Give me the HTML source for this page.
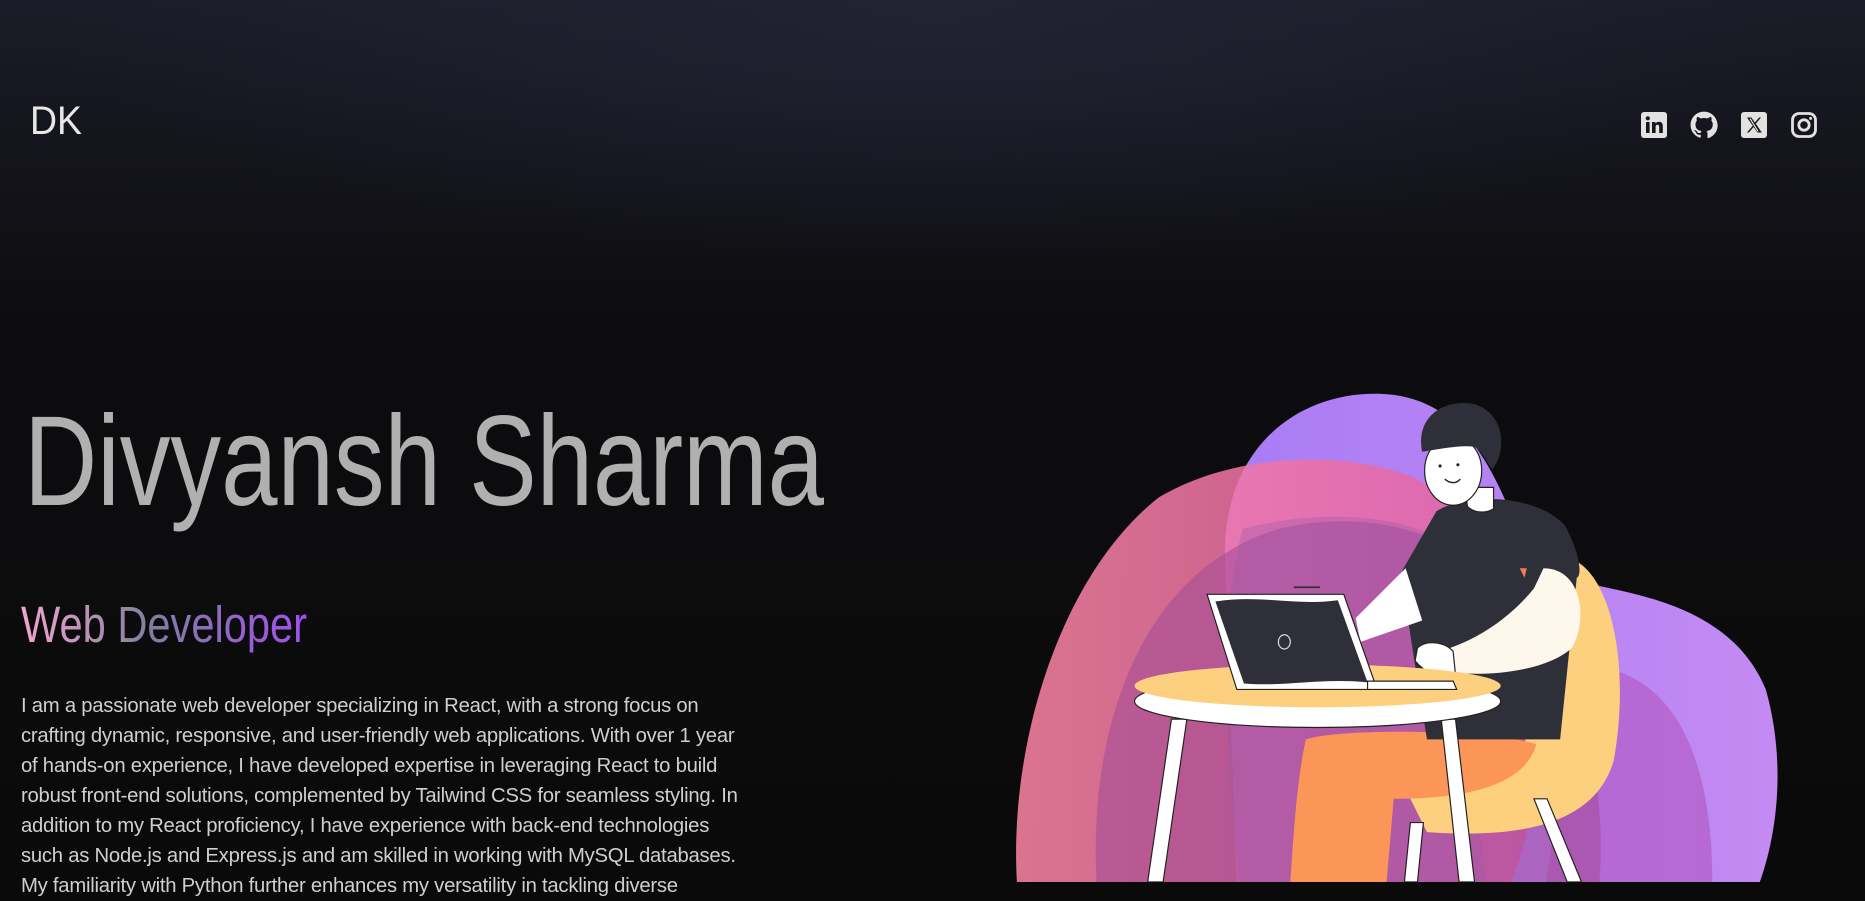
<!DOCTYPE html>
<html style="background:#0a0a0a"><head><meta charset="utf-8"><style>
html,body{margin:0;padding:0}
body{width:1865px;height:882px;overflow:hidden;position:relative;font-family:"Liberation Sans",sans-serif;
background:radial-gradient(ellipse 900px 260px at 50% 0%, #222234 0%, rgba(34,34,52,0) 100%),linear-gradient(to bottom,#1c1c28 0%,#15151d 130px,#0d0d10 320px,#0a0a0a 100%);}
.abs{position:absolute}
#para{left:21px;top:691px;font-size:20.3px;line-height:30px;color:#cfcfcf;white-space:nowrap;letter-spacing:-0.25px}
</style></head><body>

<svg class="abs" style="left:0;top:0" width="1865" height="882">
<defs>
<linearGradient id="wd" x1="0" x2="1" y1="0" y2="0">
<stop offset="0" stop-color="#f3a6cf"/><stop offset="0.45" stop-color="#7f7f9c"/><stop offset="1" stop-color="#a24ff0"/>
</linearGradient>
</defs>
<text x="30" y="134" font-family="Liberation Sans" font-size="40" fill="#e8e8e8" textLength="52" lengthAdjust="spacingAndGlyphs">DK</text>
<text x="24" y="505" font-family="Liberation Sans" font-size="128" fill="#b0b0b0" textLength="800" lengthAdjust="spacingAndGlyphs">Divyansh Sharma</text>
<text x="21" y="642" font-family="Liberation Sans" font-size="51" fill="url(#wd)" textLength="286" lengthAdjust="spacingAndGlyphs">Web Developer</text>
</svg>

<div id="para" class="abs">I am a passionate web developer specializing in React, with a strong focus on<br>crafting dynamic, responsive, and user-friendly web applications. With over 1 year<br>of hands-on experience, I have developed expertise in leveraging React to build<br>robust front-end solutions, complemented by Tailwind CSS for seamless styling. In<br>addition to my React proficiency, I have experience with back-end technologies<br>such as Node.js and Express.js and am skilled in working with MySQL databases.<br>My familiarity with Python further enhances my versatility in tackling diverse</div>

<svg class="abs" style="left:1641px;top:112px" width="26" height="26" viewBox="0 0 26 26">
<rect x="0" y="0" width="26" height="26" rx="3" fill="#e2e2e2"/>
<rect x="5" y="10" width="3.6" height="11" fill="#15151d"/><circle cx="6.8" cy="6.3" r="2.1" fill="#15151d"/>
<path d="M11 10h3.4v1.6c.6-1 1.8-1.9 3.6-1.9 3 0 3.8 2 3.8 4.6V21h-3.6v-5.8c0-1.3-.3-2.4-1.7-2.4s-1.9 1-1.9 2.4V21H11z" fill="#15151d"/>
</svg>
<svg class="abs" style="left:1690px;top:111px" width="28" height="28" viewBox="0 0 24 24">
<path fill="#e2e2e2" d="M12 .5C5.6.5.5 5.6.5 12c0 5.1 3.3 9.4 7.900 10.9.6.1.8-.2.8-.6v-2c-3.2.7-3.900-1.5-3.900-1.5-.5-1.3-1.3-1.7-1.3-1.7-1-.7.1-.7.1-.7 1.2.1 1.800 1.200 1.800 1.200 1 1.800 2.800 1.300 3.400 1 .1-.8.4-1.300.7-1.500-2.600-.3-5.300-1.300-5.300-5.700 0-1.300.5-2.300 1.200-3.100-.1-.3-.5-1.500.1-3.100 0 0 1-.3 3.200 1.200a11 11 0 0 1 5.800 0c2.200-1.500 3.200-1.200 3.200-1.200.6 1.600.2 2.800.1 3.100.7.8 1.200 1.900 1.200 3.100 0 4.400-2.700 5.400-5.300 5.700.4.4.8 1.100.8 2.200v3.300c0 .3.2.7.8.6 4.600-1.500 7.900-5.800 7.900-10.900C23.5 5.600 18.400.5 12 .5z"/>
</svg>
<svg class="abs" style="left:1741px;top:112px" width="26" height="26" viewBox="0 0 26 26">
<rect x="0" y="0" width="26" height="26" rx="3" fill="#e2e2e2"/>
<path d="M6 5.5h4.3l3.6 5 4.2-5h1.9l-5.2 6.2 6 8.8h-4.3l-3.9-5.5-4.7 5.5H6l5.8-6.8z" fill="#15151d"/>
<path d="M8.4 6.6h1.4l7.9 12.8h-1.4z" fill="#e2e2e2"/>
</svg>
<svg class="abs" style="left:1791px;top:112px" width="26" height="26" viewBox="0 0 26 26">
<rect x="1.5" y="1.5" width="23" height="23" rx="6.5" fill="none" stroke="#e2e2e2" stroke-width="2.8"/>
<circle cx="13" cy="13" r="5.2" fill="none" stroke="#e2e2e2" stroke-width="2.8"/>
<circle cx="19.6" cy="6.4" r="1.5" fill="#e2e2e2"/>
</svg>

<svg class="abs" style="left:0;top:0" width="1865" height="882" viewBox="0 0 1568 742">
<defs>
<linearGradient id="pur" x1="0" x2="1"><stop offset="0" stop-color="#a97cf5"/><stop offset="1" stop-color="#c38af2"/></linearGradient>
<linearGradient id="pink" x1="0" x2="1"><stop offset="0" stop-color="#ff86a8"/><stop offset="1" stop-color="#e05fa2"/></linearGradient>
</defs>
<path d="M1030,470 C1028,370 1100,325 1170,332 C1240,340 1262,410 1290,480 C1340,498 1450,495 1485,580 C1502,640 1495,700 1480,742 L1040,742 Z" fill="url(#pur)"/>
<path d="M1330,560 C1390,560 1440,610 1440,742 L1300,742 Z" fill="#b45cc6" opacity="0.7"/>
<path d="M855,742 C848,620 895,480 975,418 C1040,380 1130,380 1185,400 C1240,425 1265,480 1280,540 C1300,620 1290,700 1270,742 Z" fill="url(#pink)" opacity="0.85"/>
<path d="M922,742 C915,610 960,480 1075,445 C1180,420 1265,470 1305,545 C1340,610 1350,680 1345,742 Z" fill="#a24b97" opacity="0.55"/>
<path d="M1042,742 C1030,620 1025,520 1045,445 C1100,430 1170,430 1215,455 L1250,742 Z" fill="#9c5aa8" opacity="0.35"/>
<path d="M1305,468 C1355,462 1372,560 1357,640 C1342,692 1282,706 1200,700 L1180,660 L1282,628 Z" fill="#fcd07e"/>
<path d="M1098,622 C1130,612 1255,614 1292,626 C1282,662 1230,672 1172,672 L1166,742 L1085,742 C1088,700 1090,660 1098,622 Z" fill="#fb9658"/>
<path d="M1208,430 C1235,414 1292,416 1316,442 C1330,468 1330,485 1326,486 L1312,622 L1200,622 L1190,560 L1178,482 Z" fill="#2f2f39"/>
<path d="M1232,410 L1256,410 L1256,428 C1250,432 1240,432 1234,426 Z" fill="#fff" stroke="#222" stroke-width="1"/>
<ellipse cx="1222" cy="396" rx="24" ry="29" fill="#fff" stroke="#222" stroke-width="1"/>
<path d="M1196,380 C1190,350 1215,335 1240,340 C1265,348 1268,378 1255,395 C1248,385 1245,378 1240,376 C1228,374 1210,378 1196,380 Z" fill="#2f2f39"/>
<path d="M1215,403 C1219,407 1225,407 1228,403" stroke="#222" fill="none" stroke-width="1.2"/>
<circle cx="1211" cy="392" r="1.3" fill="#222"/><circle cx="1226" cy="391" r="1.3" fill="#222"/>
<path d="M1182,478 L1140,520 L1144,540 L1196,522 Z" fill="#fff"/>
<path d="M1298,478 C1330,478 1336,520 1322,545 C1300,565 1250,570 1215,565 L1210,548 C1240,540 1270,520 1290,495 Z" fill="#fdf7ec"/>
<path d="M1278,478 L1284,478 L1282,486 Z" fill="#f47a5a"/>
<path d="M1192,545 C1200,538 1215,540 1222,548 L1224,568 C1212,572 1198,566 1190,556 Z" fill="#fff" stroke="#222" stroke-width="1"/>
<polygon points="985,605 998,605 978,742 965,742" fill="#fff" stroke="#222" stroke-width="1"/>
<polygon points="1212,605 1224,605 1240,742 1227,742" fill="#fff" stroke="#222" stroke-width="1"/>
<polygon points="1290,672 1301,672 1330,742 1318,742" fill="#fff" stroke="#222" stroke-width="1"/>
<polygon points="1186,692 1197,692 1192,742 1181,742" fill="#fff" stroke="#222" stroke-width="1"/>
<ellipse cx="1108" cy="590" rx="154" ry="22" fill="#fff" stroke="#222" stroke-width="1"/>
<ellipse cx="1108" cy="577" rx="154" ry="18" fill="#fcd07e"/>
<polygon points="1015,500 1130,500 1158,580 1040,580" fill="#fff" stroke="#222" stroke-width="1"/>
<path d="M1022,506 C1060,500 1090,510 1125,505 L1150,574 C1110,570 1080,578 1046,575 Z" fill="#2f2f39"/>
<polygon points="1150,573 1222,573 1225,580 1150,580" fill="#fff" stroke="#222" stroke-width="1"/>
<ellipse cx="1080" cy="540" rx="5" ry="6" fill="none" stroke="#ddd" stroke-width="1"/>
<line x1="1088" y1="494" x2="1110" y2="494" stroke="#333" stroke-width="1.5"/>
</svg>
</body></html>
